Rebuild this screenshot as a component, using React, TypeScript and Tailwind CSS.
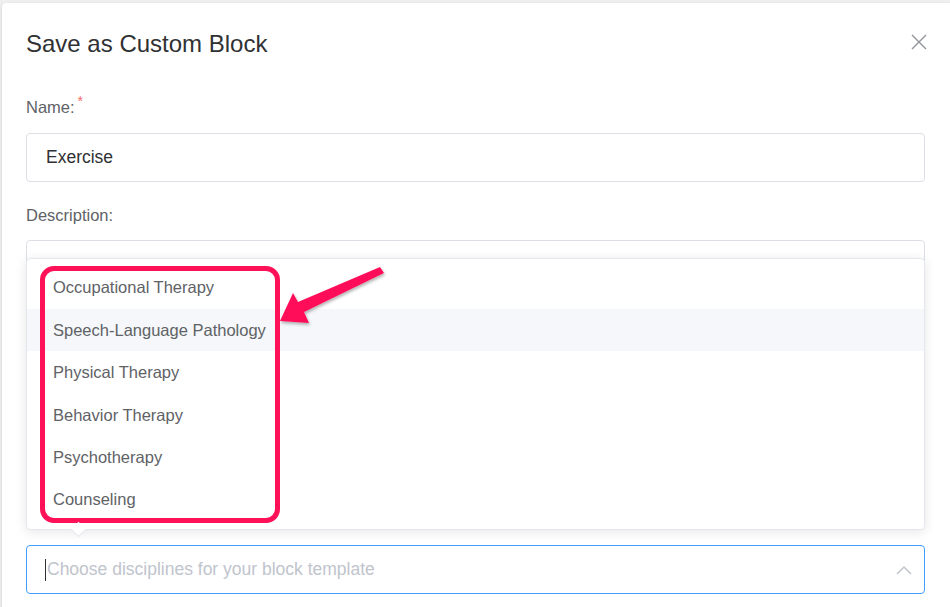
import { useState } from "react";

const disciplines = [
  "Occupational Therapy",
  "Speech-Language Pathology",
  "Physical Therapy",
  "Behavior Therapy",
  "Psychotherapy",
  "Counseling",
];

export default function App() {
  const [hovered] = useState(1);

  return (
    <div
      className="w-[950px] h-[607px] overflow-hidden bg-[#efefef] pt-[3px] pl-[2px] relative"
      style={{ fontFamily: '"Liberation Sans", Arial, sans-serif' }}
    >
      <div className="bg-white h-[700px] rounded-tl-[4px] shadow-[0_1px_3px_rgba(0,0,0,0.15)] pl-[24px] pr-[25px] pt-[26px]">
        {/* Header */}
        <div className="flex items-center justify-between h-[30px]">
          <h3 className="text-[24px] leading-[30px] text-[#303133]">Save as Custom Block</h3>
          <button className="mr-[-2px] mt-[-4px] text-[#909399]">
            <svg width="16" height="16" viewBox="0 0 16 16" fill="none">
              <path d="M1 1L15 15M15 1L1 15" stroke="currentColor" strokeWidth="1.4" />
            </svg>
          </button>
        </div>

        {/* Name */}
        <label className="block mt-[37px] text-[16.5px] leading-[22px] text-[#606266]">
          Name:<span className="text-[#f56c6c] text-[14px] align-top ml-[3px] relative top-[-6px]">*</span>
        </label>
        <div className="mt-[15px] h-[49px] border border-[#dcdfe6] rounded-[4px] flex items-center px-[19px] text-[17.5px] text-[#303133]">
          Exercise
        </div>

        {/* Description */}
        <label className="block mt-[22px] text-[16.5px] leading-[22px] text-[#606266]">
          Description:
        </label>
        <div className="mt-[14px] h-[200px] border border-[#dcdfe6] rounded-[4px]" />

        {/* Disciplines select */}
        <div className="relative mt-[105px]">
          <div className="absolute left-0 right-0 bottom-[calc(100%+15px)] bg-white border border-[#e4e7ed] rounded-[4px] shadow-[0_2px_12px_rgba(0,0,0,0.1)] pt-[8px] pb-[8px] z-10">
            {disciplines.map((d, i) => (
              <div
                key={d}
                className={`h-[42.4px] flex items-center pl-[26px] text-[16.5px] text-[#606266] ${i === hovered ? "bg-[#f5f7fa]" : ""}`}
              >
                {d}
              </div>
            ))}
            {/* highlight box */}
            <div className="absolute left-[13px] top-[7px] w-[240px] h-[257px] border-[5px] border-[#ff1158] rounded-[14px] pointer-events-none" />
            {/* popper arrow */}
            <div className="absolute left-[46px] bottom-[-6px] w-[11px] h-[11px] bg-white border-r border-b border-[#e4e7ed] rotate-45" />
          </div>

          <div className="h-[49px] border border-[#409eff] rounded-[4px] flex items-center pl-[18px] pr-[12px]">
            <span className="w-px h-[22px] bg-[#303133]" />
            <span className="ml-[1px] flex-1 text-[17.5px] text-[#c0c4cc]">
              Choose disciplines for your block template
            </span>
            <svg width="16" height="10" viewBox="0 0 16 10" fill="none" className="text-[#c0c4cc]">
              <path d="M1 9L8 2L15 9" stroke="currentColor" strokeWidth="1.5" />
            </svg>
          </div>
        </div>
      </div>

      {/* annotation arrow */}
      <svg
        className="absolute left-0 top-0 pointer-events-none z-20"
        width="950"
        height="607"
        viewBox="0 0 950 607"
      >
        <defs>
          <filter id="sh" x="-20%" y="-20%" width="140%" height="140%">
            <feDropShadow dx="1" dy="2" stdDeviation="1.5" floodColor="#000" floodOpacity="0.3" />
          </filter>
        </defs>
        <polygon
          points="280,321 293,293 298,302 380,267 384,273 304,312 309,323"
          fill="#ff1158"
          filter="url(#sh)"
        />
      </svg>
    </div>
  );
}
